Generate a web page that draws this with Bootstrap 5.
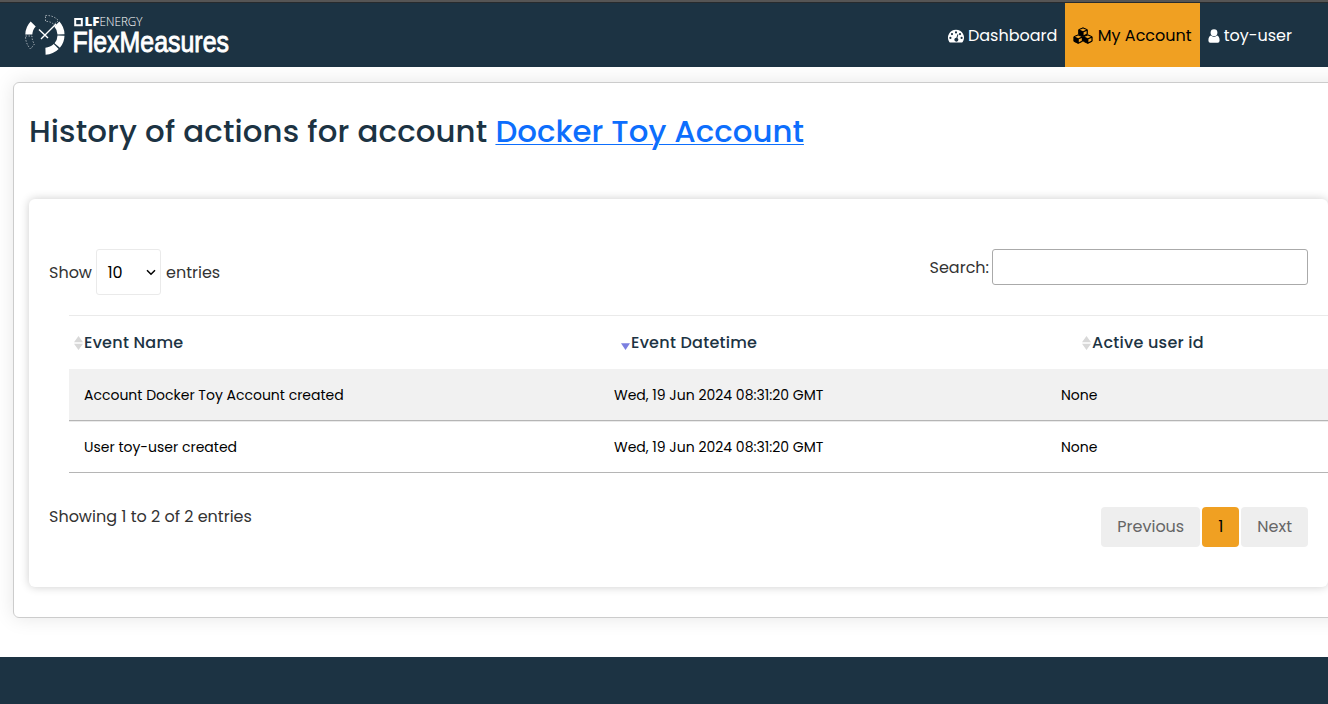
<!DOCTYPE html>
<html lang="en">
<head>
<meta charset="utf-8">
<meta name="viewport" content="width=device-width, initial-scale=1">
<title>FlexMeasures</title>
<link rel="stylesheet" href="https://cdn.jsdelivr.net/npm/bootstrap@5.3.0/dist/css/bootstrap.min.css">
<style>
:root{--navy:#1c3343;--amber:#f0a022}
html,body{overflow:hidden}
body{font-family:Poppins,Inter,"Noto Sans",sans-serif;font-size:16px;line-height:24px;color:#333;min-height:704px;background:#fff}
.topnav{height:67px;background:var(--navy);border-top:2px solid #555;box-shadow:inset 0 1px #272b2e;padding:1px 28px 0 24px}
.topnav .nav-link{height:64px;padding:1px 8px 0;color:#fff;font-size:16px}
.topnav .nav-link:first-child{padding-right:7.500px}
.topnav .nav-link.active{background:var(--amber);color:#000}
.topnav svg{overflow:visible}
.panel{margin:15px -60px 0 13px;height:536px;border:1px solid #ccc;border-radius:6px;box-shadow:0 0 20px rgba(0,0,0,.1);padding:30px 75px 0 15px}
h1{font-size:30.800px;line-height:38px;font-weight:500;letter-spacing:.12px;color:var(--navy);margin:0 0 48px;white-space:nowrap}
h1 a{letter-spacing:.01px;text-decoration-thickness:1px!important;text-underline-offset:2px}
.sheet{width:1299px;height:388px;border-radius:6px;box-shadow:0 0 10px rgba(0,0,0,.2);padding:50px 20px 0;background:#fff}
.len{width:65px;height:46px;border:1px solid #eaeaea;border-radius:3px;padding:0 4px 0 10.5px;margin:0 5px 0 4px;color:#000}
.drop{padding-top:2px}
.find{width:316px;height:36px;border:1px solid #aaa;border-radius:3px;background:#fff;margin-left:3px}
.grid{width:1299px;margin:20px 0 0 20px;border-top:1px solid #eaeaea;table-layout:fixed;border-collapse:separate;border-spacing:0;color:#000}
.grid th{height:53px;padding:0;font-weight:500;letter-spacing:.016em;color:var(--navy)}
.grid th svg{display:block;margin-right:1px}
.grid td{height:52px;padding:0 15px;font-size:14px;border-bottom:1px solid #b5b5b5}
.grid tbody tr:first-child td{background:#f1f1f1}
.grid tbody tr:last-child td{box-shadow:inset 0 1px #eaeaea}
.page-item{margin:0!important}
.page-link{height:40px;padding:0 16px;border:0;border-radius:4px!important;background:#eee;color:#666;display:flex;align-items:center;margin:0!important}
.page-item.active .page-link{background:var(--amber);color:#000}
footer{margin-top:39px;height:47px;background:var(--navy)}
</style>
</head>
<body>
<nav class="topnav d-flex justify-content-between">
<a href="#" aria-label="FlexMeasures"><svg width="210" height="60" viewBox="24 3 210 60" class="d-block">
<g fill="none" stroke="#fff">
<path d="M56.8 24A15.8 15.8 0 0 1 61 34.4M61 35.6A15.8 15.8 0 0 1 57.2 45.5M56.2 46.6A15.8 15.8 0 0 1 45.5 51.2M28.8 34.5A16 16 0 0 1 33.2 24" stroke-width="7"/>
<path d="M45.5 15.5Q53 15 58.5 20.500L54 24.500Q50 21 45.500 21.500ZM25.500 36H32Q32 41 34.500 44L30.500 49Q25.500 43.500 25.500 36" stroke-width=".6" stroke-dasharray="1.500 1.500"/>
<path d="M39 29.500L48 38M41 39L56 24" stroke-width="1.400"/></g>
<path d="M75.200 19h6.600v6.300h-6.600z" fill="none" stroke="#fff" stroke-width="2"/>
<g fill="#fff"><text x="84.500" y="26.300" font-family="Open Sans,sans-serif" font-weight="800" font-size="12" textLength="15" lengthAdjust="spacingAndGlyphs">LF</text>
<text x="99.500" y="26.300" font-family="Open Sans,sans-serif" font-weight="300" font-size="12" textLength="43" lengthAdjust="spacingAndGlyphs">ENERGY</text>
<text x="72.500" y="51.800" font-family="Liberation Sans Narrow,Liberation Sans,sans-serif" font-size="29.500" stroke="#fff" stroke-width=".9" textLength="156.500" lengthAdjust="spacingAndGlyphs">FlexMeasures</text></g>
</svg></a>
<div class="nav">
<a class="nav-link d-flex align-items-center" href="#"><svg width="16" height="14" viewBox="0 0 16 14" style="margin-right:4px"><path fill="#fff" fill-rule="evenodd" d="M8 .7A8 8 0 0 0 1.300 13q.2.400.7.400H14q.5 0 .7-.400A8 8 0 0 0 8 .7M8 2.300a1.100 1.100 0 1 1 0 2.200 1.100 1.100 0 0 1 0-2.200M4 4a1.100 1.100 0 1 1 0 2.200A1.100 1.100 0 0 1 4 4M2.400 7.800a1.100 1.100 0 1 1 0 2.200 1.100 1.100 0 0 1 0-2.200M12 4a1.100 1.100 0 1 1 0 2.200A1.100 1.100 0 0 1 12 4M13.600 7.800a1.100 1.100 0 1 1 0 2.200 1.100 1.100 0 0 1 0-2.200M9.500 5.300l.9.200-1 3.500A2 2 0 1 1 8.400 8.700Z"/></svg>Dashboard</a>
<a class="nav-link active d-flex align-items-center" href="#"><svg width="20" height="17" viewBox="0 0 20 17" style="margin-right:5px"><g fill="#000" stroke="#000" stroke-linejoin="round"><path id="cube" d="M10 .8l4.300 1.900v4.600L10 9.400 5.700 7.300V2.700z"/><use href="#cube" x="-4.800" y="7"/><use href="#cube" x="4.800" y="7"/></g><g fill="var(--amber)"><path id="face" d="M10 1.500l3.200 1.300L10 4.200 6.800 2.800zM10.600 5.300l3-1.300v2.800l-3 1.500z"/><use href="#face" x="-4.800" y="7"/><use href="#face" x="4.800" y="7"/></g></svg>My Account</a>
<a class="nav-link d-flex align-items-center" href="#"><svg width="12" height="14" viewBox="0 0 12 14" style="margin-right:4px" fill="#fff"><circle cx="6" cy="3.700" r="3.400"/><path d="M3 6.500Q6 9 9 6.500Q11.600 7.300 11.600 11.500Q11.600 13.700 9.700 13.700H2.300Q.4 13.700.4 11.500Q.4 7.300 3 6.500"/></svg>toy-user</a>
</div>
</nav>
<main class="panel">
<h1>History of actions for account <a href="#">Docker Toy Account</a></h1>
<section class="sheet">
<div class="d-flex justify-content-between align-items-start">
<div class="d-flex align-items-center"><span class="drop">Show</span><span class="len d-flex align-items-center justify-content-between"><span class="drop">10</span><svg width="10" height="7" viewBox="0 0 10 7"><path d="M1 1.200l4 4 4-4" fill="none" stroke="#000" stroke-width="1.500"/></svg></span><span class="drop">entries</span></div>
<label class="d-flex align-items-center"><span class="drop">Search:</span><input class="find" type="search"></label>
</div>
<table class="grid">
<colgroup><col style="width:530px"><col style="width:447px"><col></colgroup>
<thead><tr>
<th><div class="d-flex align-items-center" style="padding-left:5px"><svg width="9" height="16"><path d="M0 7.300h9L4.500 1zM0 8.700h9L4.500 15z" fill="#d8d8d8"/></svg>Event Name</div></th>
<th><div class="d-flex align-items-center" style="padding-left:22px"><svg width="9" height="16"><path d="M0 8.300h9L4.500 15z" fill="#7b7fe0"/></svg>Event Datetime</div></th>
<th><div class="d-flex align-items-center" style="padding-left:36px"><svg width="9" height="16"><path d="M0 7.300h9L4.500 1zM0 8.700h9L4.500 15z" fill="#d8d8d8"/></svg>Active user id</div></th>
</tr></thead>
<tbody>
<tr><td>Account Docker Toy Account created</td><td>Wed, 19 Jun 2024 08:31:20 GMT</td><td>None</td></tr>
<tr><td>User toy-user created</td><td>Wed, 19 Jun 2024 08:31:20 GMT</td><td>None</td></tr>
</tbody>
</table>
<div class="d-flex justify-content-between align-items-start" style="padding-top:34px">
<span style="margin-top:-2px">Showing 1 to 2 of 2 entries</span>
<ul class="pagination m-0" style="gap:2px"><li class="page-item"><a class="page-link" href="#">Previous</a></li><li class="page-item active"><a class="page-link" href="#">1</a></li><li class="page-item"><a class="page-link" href="#">Next</a></li></ul>
</div>
</section>
</main>
<footer></footer>
<script src="https://cdn.jsdelivr.net/npm/bootstrap@5.3.0/dist/js/bootstrap.bundle.min.js"></script>
</body>
</html>
